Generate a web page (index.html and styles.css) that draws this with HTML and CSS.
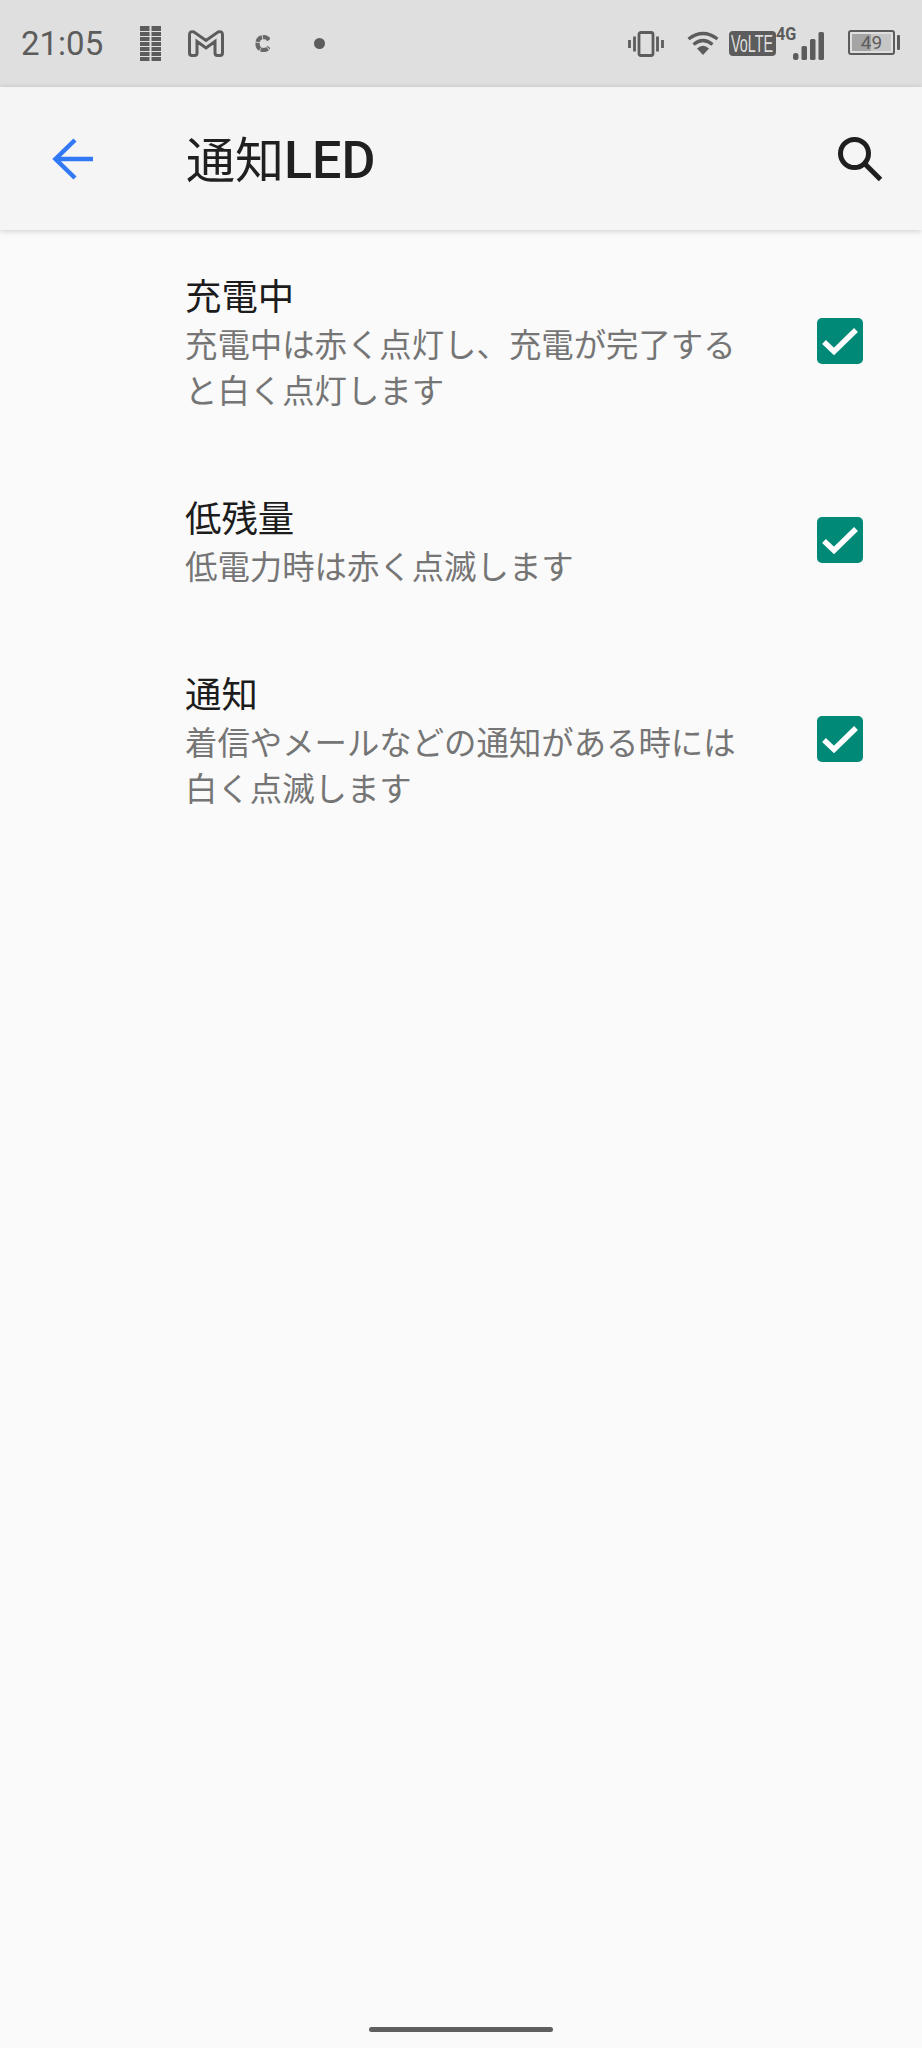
FILE: index.html
```html
<!DOCTYPE html>
<html lang="ja">
<head>
    <meta charset="UTF-8">
    <meta name="viewport" content="width=device-width, initial-scale=1.0">
    <title>通知LED</title>
    <link rel="stylesheet" href="styles.css">
</head>
<body>
    <div class="phone">
        <div class="statusbar">
            <div class="status-left">
                <span class="clock">21:05</span>
                <svg class="icon-bars" width="21" height="35" viewBox="0 0 21 35">
                    <path d="M0 0h9.500v35H0zM11.500 0H21v35h-9.500z" fill="#5c5c5c"/>
                    <path d="M0 5.500h21M0 10.500h21M0 15.500h21M0 20.500h21M0 25.500h21M0 30.500h21" stroke="#dfdfdf" stroke-width="1.100"/>
                </svg>
                <svg class="icon-mail" width="36" height="27" viewBox="0 0 36 27">
                    <path d="M1.500 5Q1.500 .5 6 2L18 10.500 30 2Q34.500 .5 34.500 5V23Q34.500 25.500 32 25.500H29.500Q27 25.500 27 23V11.500L18 18 9 11.500V23Q9 25.500 6.500 25.500H4Q1.500 25.500 1.500 23Z" fill="none" stroke="#5c5c5c" stroke-width="3"/>
                </svg>
                <svg class="icon-c" width="15" height="17" viewBox="0 0 15 17">
                    <path d="M14 5Q12 2 8.500 2 2.500 2.500 2.500 8.500T8.500 15Q12 15 14 12" fill="none" stroke="#686868" stroke-width="4.200" stroke-dasharray="7 .8"/>
                </svg>
                <span class="dot"></span>
            </div>
            <div class="status-right">
                <svg class="icon-vibrate" width="36" height="26" viewBox="0 0 36 26">
                    <rect x="11" y="1.500" width="14" height="23" rx="2" fill="none" stroke="#5c5c5c" stroke-width="2.800"/>
                    <path d="M6.500 5.500v15M29.500 5.500v15M1.500 9v8M34.500 9v8" stroke="#5c5c5c" stroke-width="2.800"/>
                </svg>
                <svg class="icon-wifi" width="32" height="24" viewBox="0 0 32 24">
                    <path d="M1.500 8Q16 -3 30.500 8" fill="none" stroke="#5c5c5c" stroke-width="3.200"/>
                    <path d="M6.500 13.500Q16 5.500 25.500 13.500" fill="none" stroke="#5c5c5c" stroke-width="3.200"/>
                    <path d="M10 17.500Q16 12 22 17.500L16 24Z" fill="#5c5c5c"/>
                </svg>
                <div class="volte"><span>VoLTE</span></div>
                <div class="signal">
                    <span class="net">4G</span>
                    <svg width="32" height="28" viewBox="0 0 32 28">
                        <rect x="0" y="21" width="5.500" height="7" rx="2.500" fill="#5c5c5c"/>
                        <rect x="8.500" y="14" width="5.500" height="14" rx="1.500" fill="#5c5c5c"/>
                        <rect x="17" y="7" width="5.500" height="21" rx="1.500" fill="#5c5c5c"/>
                        <rect x="25.500" y="0" width="5.500" height="28" rx="1.500" fill="#5c5c5c"/>
                    </svg>
                </div>
                <div class="battery">
                    <div class="battery-body">
                        <div class="battery-level">
                            <div class="battery-fill" style="width: 49%"></div>
                        </div>
                        <span class="battery-num">49</span>
                    </div>
                    <span class="battery-cap"></span>
                </div>
            </div>
        </div>

        <div class="appbar">
            <svg class="back" width="42" height="42" viewBox="0 0 42 42">
                <path d="M41 21H3.500M23 2L3.500 21 23 40" fill="none" stroke="#3179f5" stroke-width="4.500"/>
            </svg>
            <h1>通知<span class="title-latin">LED</span></h1>
            <svg class="search" width="46" height="46" viewBox="0 0 46 46">
                <circle cx="17.500" cy="17.500" r="14" fill="none" stroke="#1f1f1f" stroke-width="5"/>
                <path d="M27.500 27.500l16 16" stroke="#1f1f1f" stroke-width="5"/>
            </svg>
        </div>

        <div class="list">
            <div class="row row-first">
                <div class="row-text">
                    <div class="row-title">充電中</div>
                    <div class="row-sub">充電中は赤く点灯し、充電が完了すると白く点灯します</div>
                </div>
                <div class="check"><svg width="46" height="46" viewBox="0 0 46 46"><path d="M7 24l10 9.500L39 12" fill="none" stroke="#fff" stroke-width="5.500"/></svg></div>
            </div>
            <div class="row">
                <div class="row-text">
                    <div class="row-title">低残量</div>
                    <div class="row-sub">低電力時は赤く点滅します</div>
                </div>
                <div class="check"><svg width="46" height="46" viewBox="0 0 46 46"><path d="M7 24l10 9.500L39 12" fill="none" stroke="#fff" stroke-width="5.500"/></svg></div>
            </div>
            <div class="row">
                <div class="row-text">
                    <div class="row-title">通知</div>
                    <div class="row-sub">着信やメールなどの通知がある時には白く点滅します</div>
                </div>
                <div class="check"><svg width="46" height="46" viewBox="0 0 46 46"><path d="M7 24l10 9.500L39 12" fill="none" stroke="#fff" stroke-width="5.500"/></svg></div>
            </div>
        </div>

        <div class="navbar"><span class="nav-pill"></span></div>
    </div>
</body>
</html>
```
FILE: styles.css
```css
html, body {
    margin: 0;
    padding: 0;
}
body {
    font-family: "Noto Sans CJK JP", "Noto Sans", sans-serif;
    background: #fafafa;
}
.phone {
    width: 922px;
    height: 2048px;
    display: flex;
    flex-direction: column;
    overflow: hidden;
}

/* status bar */
.statusbar {
    height: 87px;
    flex: none;
    background: #dfdfdf;
    display: flex;
    justify-content: space-between;
    align-items: center;
    padding: 0 22px 0 21px;
    box-sizing: border-box;
    color: #5c5c5c;
}
.status-left, .status-right {
    display: flex;
    align-items: center;
}
.clock {
    font-family: Roboto, sans-serif;
    font-size: 33px;
    width: 119px;
}
.icon-mail {
    margin-left: 27px;
}
.icon-c {
    margin-left: 31px;
}
.dot {
    width: 11px;
    height: 11px;
    border-radius: 50%;
    background: #5c5c5c;
    margin-left: 44px;
}
.icon-wifi {
    margin-left: 23px;
    margin-bottom: 1px;
}
.volte {
    margin-left: 10px;
    background: #5c5c5c;
    color: #dfdfdf;
    font-family: "Liberation Sans", sans-serif;
    font-size: 24px;
    width: 47px;
    height: 25px;
    line-height: 25px;
    border-radius: 4px;
    display: flex;
    justify-content: center;
    overflow: hidden;
}
.volte span {
    flex: none;
    transform: scaleX(0.6);
}
.signal {
    position: relative;
    width: 49px;
    height: 33px;
}
.signal svg {
    position: absolute;
    right: 0;
    bottom: 0;
}
.net {
    position: absolute;
    left: 0;
    top: 0;
    font-family: Roboto, sans-serif;
    font-weight: 700;
    font-size: 19px;
    line-height: 14px;
    transform: scaleX(0.85);
    transform-origin: left;
}
.battery {
    display: flex;
    align-items: center;
    margin: 0 0 2px 23px;
}
.battery-body {
    position: relative;
    width: 47px;
    height: 25px;
    box-sizing: border-box;
    border: 2px solid #5c5c5c;
    border-radius: 3px;
    padding: 2px;
}
.battery-level {
    height: 100%;
    background: #c6c6c6;
}
.battery-fill {
    height: 100%;
    background: #a4a4a4;
}
.battery-num {
    position: absolute;
    inset: 0;
    text-align: center;
    font-family: Roboto, sans-serif;
    font-size: 19px;
    line-height: 21px;
}
.battery-cap {
    width: 3px;
    height: 15px;
    background: #5c5c5c;
    margin-left: 2px;
    border-radius: 1px;
}

/* app bar */
.appbar {
    height: 143px;
    flex: none;
    background: #f5f5f5;
    box-shadow: 0 1px 6px rgba(0, 0, 0, 0.18);
    display: flex;
    align-items: center;
    padding: 0 39px 0 52px;
    box-sizing: border-box;
    position: relative;
}
.appbar h1 {
    margin: 0 0 4px 92px;
    flex: 1;
    font-size: 49px;
    font-weight: 400;
    color: #202020;
}
.title-latin {
    font-family: Roboto, sans-serif;
    font-size: 52px;
    font-weight: 500;
}

/* settings rows */
.list {
    flex: 1;
}
.row {
    display: flex;
    justify-content: space-between;
    align-items: center;
    padding: 78px 59px 0 185px;
}
.row-first {
    padding-top: 38px;
}
.row-text {
    width: 560px;
}
.row-title {
    font-size: 36.400px;
    line-height: 52px;
    color: #1c1c1c;
}
.row-sub {
    font-size: 32.400px;
    line-height: 46px;
    color: #757575;
}
.check {
    width: 46px;
    height: 46px;
    background: #008976;
    border-radius: 5px;
    margin-top: 2px;
}
.check svg {
    display: block;
}

/* bottom gesture bar */
.navbar {
    height: 21px;
    flex: none;
    display: flex;
    justify-content: center;
}
.nav-pill {
    width: 184px;
    height: 5px;
    border-radius: 3px;
    background: #5f5f5f;
}
```
